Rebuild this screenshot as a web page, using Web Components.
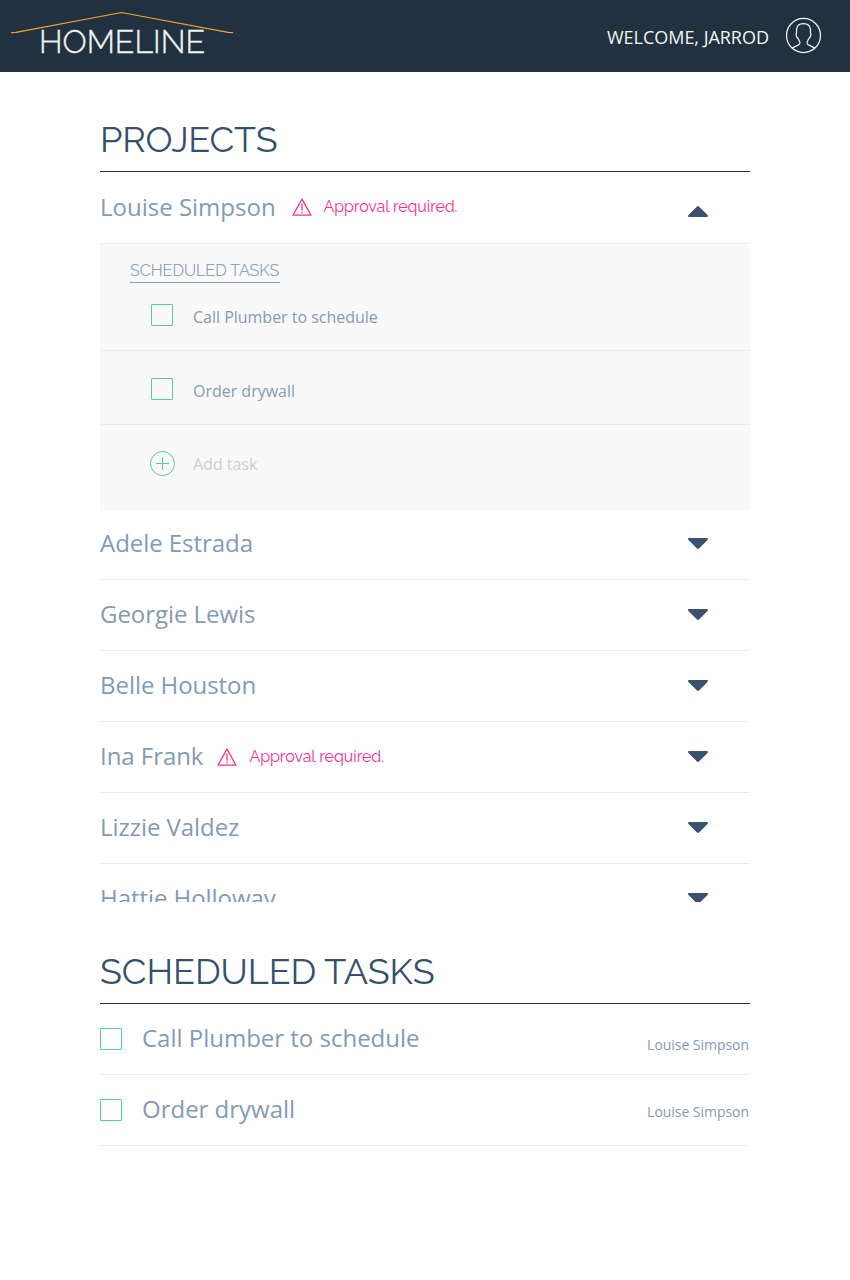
<!DOCTYPE html>
<html lang="en">
<head>
<meta charset="utf-8">
<title>Homeline</title>
<style>
body { margin: 0; background: #fff; font-family: "Open Sans", sans-serif; color: #839bb3; }
</style>
</head>
<body>
<home-app></home-app>
<script>
const define = (name, html, setup) => {
  const template = document.createElement('template');
  template.innerHTML = html;
  customElements.define(name, class extends HTMLElement {
    connectedCallback() {
      if (this.shadowRoot) return;
      this.attachShadow({ mode: 'open' }).append(template.content.cloneNode(true));
      if (setup) setup(this, this.shadowRoot);
    }
  });
};

// One line of text tracked so that it spans the given width.
customElements.define('tracked-text', class extends HTMLElement {
  connectedCallback() {
    if (this.shadowRoot) return;
    const root = this.attachShadow({ mode: 'open' });
    root.innerHTML = '<style>:host{display:block;flex:none;white-space:nowrap}span{display:inline-block}</style><span></span>';
    const span = root.querySelector('span');
    span.textContent = this.getAttribute('text');
    const width = parseFloat(this.getAttribute('width'));
    if (!width) return;
    this.style.width = width + 'px';
    const natural = span.getBoundingClientRect().width;
    span.style.letterSpacing = ((width - natural) / (span.textContent.length - 1)).toFixed(3) + 'px';
  }
});

define('check-box', `<style>:host{display:block;flex:none;box-sizing:border-box;width:22px;height:22px;border:1px solid #57cb94;border-radius:1px}</style>`);

define('toggle-arrow', `<style>
:host{display:block;flex:none;width:22px;height:12px}
:host([open]) svg{transform:rotate(180deg)}
svg{display:block}
</style><svg width="22" height="12" viewBox="0 0 22 12"><path d="M1.6 0H20.4Q21.6 1 20.5 2L12 10.6Q11 11.4 10 10.6L1.5 2Q.4 1 1.6 0Z" fill="#39536f"/></svg>`);

define('approval-alert', `<style>
:host{display:flex;align-items:center;color:#fa2f8e;font:400 16px/24px Raleway,Lato,sans-serif}
svg{display:block;margin:-2px 12px 0 0}
tracked-text{margin-top:-2px}
</style>
<svg width="20" height="18" viewBox="0 0 20 18" fill="none" stroke="currentColor"><path d="M10 1.1 19 17.2H1Z" stroke-width="1.3" stroke-linejoin="round"/><path d="M10 5.5V12.7M10 13.700V15.3" stroke-width="1.3"/></svg>
<tracked-text text="Approval required." width="134"></tracked-text>`);

define('site-header', `<style>
:host{display:flex;justify-content:space-between;height:72px;background:#22313f;color:#f3f4f5}
.logo{display:grid;width:222px;margin-left:11px;padding-top:11px;align-content:start}
.logo svg,.logo tracked-text{grid-area:1/1}
.logo tracked-text{font:300 32px/40px Raleway,Lato,sans-serif;-webkit-text-stroke:.35px currentColor;margin:11px 0 0 28px}
.user{display:flex;padding-right:28px}
.user tracked-text{font-size:18px;line-height:24px;margin:25px 16px 0 0}
.user svg{margin-top:17px}
svg{display:block}
</style>
<div class="logo"><svg width="222" height="23" viewBox="0 0 222 23" fill="none" stroke="#f5a42b" stroke-width="1.2"><path d="M0 21.700L5 21.4 110.500 1.500 217 21.400 222 21.700"/></svg>
<tracked-text text="HOMELINE" width="166"></tracked-text></div>
<div class="user"><tracked-text text="WELCOME, JARROD" width="162"></tracked-text>
<svg width="37" height="37" viewBox="0 0 37 37" fill="none" stroke="#f5f6f7" stroke-width="1.25"><circle cx="18.500" cy="18.500" r="17"/><path d="M7.2 31.2C9 29.6 13.200 28.800 14.700 26.900C16 25 13.800 23.400 12.900 21.300C11.300 19.700 10.700 17.500 11.600 15.500C11 10 12.800 6.600 18.500 6.600C24.200 6.600 26 10 25.400 15.500C26.300 17.500 25.700 19.700 24.100 21.300C23.200 23.400 21 25 22.300 26.900C23.800 28.800 28 29.600 29.800 31.200"/></svg></div>`);

define('section-title', `<style>
:host{display:block;height:63px;border-bottom:1px solid #22313f;color:#34506c;font:400 36px/62px Raleway,Lato,sans-serif}
</style><tracked-text></tracked-text>`, (host, root) => {
  const old = root.querySelector('tracked-text');
  const t = document.createElement('tracked-text');
  t.setAttribute('text', host.getAttribute('text'));
  t.setAttribute('width', host.getAttribute('width'));
  old.replaceWith(t);
});

define('project-row', `<style>
:host{display:flex;align-items:center;box-sizing:border-box;height:71px;border-bottom:1px solid #ebeced;padding-right:41px;font-size:24px;line-height:34px;letter-spacing:-.05px}
.name{margin:0 14px 2px 0;white-space:nowrap}
toggle-arrow{margin:0 0 0 auto}
::slotted(approval-alert){margin-top:2px}
:host([open]){height:72px;letter-spacing:0}
:host([open]) ::slotted(approval-alert){margin-top:0}
:host([open]) .name{margin-right:16px}
:host([open]) toggle-arrow{margin-top:7px}
</style><div class="name"></div><slot></slot><toggle-arrow></toggle-arrow>`, (host, root) => {
  root.querySelector('.name').textContent = host.getAttribute('name');
  root.querySelector('toggle-arrow').toggleAttribute('open', host.hasAttribute('open'));
});

define('task-panel', `<style>
:host{display:block;height:267px;margin-bottom:-2px;background:#f9f9f9;font-size:16px;line-height:22px;letter-spacing:-.015px}
.row{display:flex;box-sizing:border-box;padding-left:51px;border-bottom:1px solid #ebeced}
.first{height:68px;padding-top:21px}.second{height:74px;padding-top:27px}
.add{padding:26px 0 0 50px;border:0}
h3{margin:0 0 0 30px;padding-top:16px;width:150px;height:22px;border-bottom:1px solid #839bb3;font:300 16px/22px Raleway,Lato,sans-serif;-webkit-text-stroke:.2px currentColor}
.row tracked-text{margin:2px 0 0 20px}
.add tracked-text{margin:2px 0 0 18px;color:#c6d0d9}
</style>
<h3><tracked-text text="SCHEDULED TASKS" width="149"></tracked-text></h3>
<div class="row first"><check-box></check-box><tracked-text text="Call Plumber to schedule"></tracked-text></div>
<div class="row second"><check-box></check-box><tracked-text text="Order drywall"></tracked-text></div>
<div class="row add"><svg width="25" height="25" viewBox="0 0 25 25" fill="none" stroke="#57cb94"><circle cx="12.500" cy="12.500" r="12"/><path d="M12.500 6V19M6 12.500H19"/></svg><tracked-text text="Add task"></tracked-text></div>`);

define('task-row', `<style>
:host{display:flex;box-sizing:border-box;height:71px;border-bottom:1px solid #ebeced;padding:24px 1px 0 0}
.name{font-size:24px;line-height:34px;margin:-7px auto 0 20px;letter-spacing:-.01px}
.owner{font-size:14px;line-height:20px;margin-top:var(--owner-top,7px);letter-spacing:-.04px}
</style><check-box></check-box><div class="name"></div><div class="owner">Louise Simpson</div>`, (host, root) => {
  root.querySelector('.name').textContent = host.getAttribute('name');
});

define('home-app', `<style>
:host{display:block;height:1280px;overflow:hidden}
main{width:650px;margin:0 auto;padding-top:36px}
.list{height:730px;overflow:hidden;margin-bottom:38px}
.late{--owner-top:3px}
</style>
<site-header></site-header>
<main>
<section-title text="PROJECTS" width="177.5"></section-title>
<div class="list">
<project-row name="Louise Simpson" open><approval-alert></approval-alert></project-row>
<task-panel></task-panel>
<project-row name="Adele Estrada"></project-row>
<project-row name="Georgie Lewis"></project-row>
<project-row name="Belle Houston"></project-row>
<project-row name="Ina Frank"><approval-alert></approval-alert></project-row>
<project-row name="Lizzie Valdez"></project-row>
<project-row name="Hattie Holloway"></project-row>
</div>
<section-title text="SCHEDULED TASKS" width="334.5"></section-title>
<task-row name="Call Plumber to schedule"></task-row>
<task-row name="Order drywall" class="late"></task-row>
</main>`);
</script>
</body>
</html>
